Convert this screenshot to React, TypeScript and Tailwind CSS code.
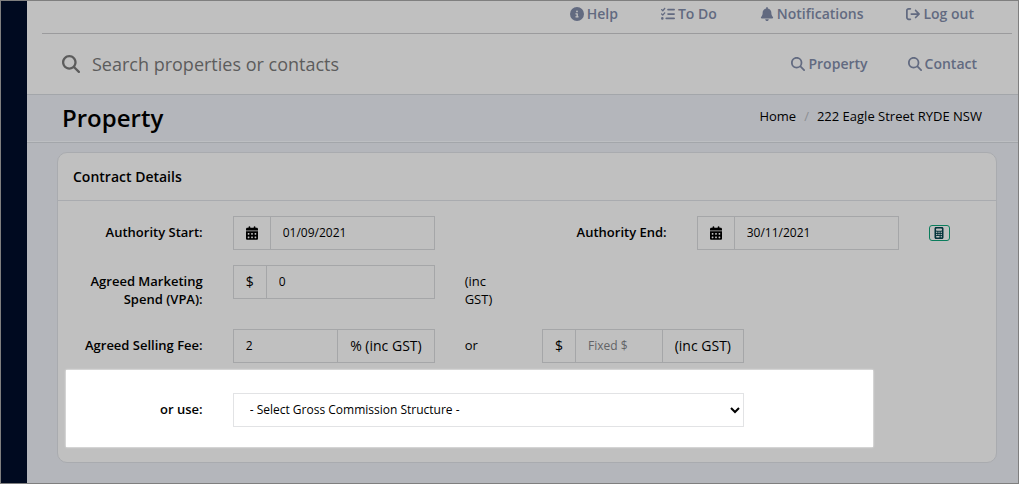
import React from "react";
import {
  FaArrowRightFromBracket,
  FaBell,
  FaCalculator,
  FaCalendarDays,
  FaCircleInfo,
  FaListCheck,
  FaMagnifyingGlass,
} from "react-icons/fa6";

const topLinks = [
  { label: "Help", icon: <FaCircleInfo size={14} /> },
  { label: "To Do", icon: <FaListCheck size={14} /> },
  { label: "Notifications", icon: <FaBell size={14} /> },
  { label: "Log out", icon: <FaArrowRightFromBracket size={14} /> },
];

const searchLinks = ["Property", "Contact"];

const labelClass =
  "block px-[15px] pt-[7px] text-right text-[13px] leading-[18px] font-semibold";
const groupClass = "flex h-[34px] border border-[#a5a6a8]";
const addonClass = "flex shrink-0 items-center border-[#a5a6a8] px-3 text-[14px]";
const inputClass =
  "w-full min-w-0 flex-1 bg-transparent px-3 text-[12px] outline-none placeholder:text-[#626366]";

type DateFieldProps = {
  id: string;
  value: string;
};

const DateField = ({ id, value }: DateFieldProps) => (
  <div className="col-span-3 px-[15px]">
    <div className={groupClass}>
      <span className={`${addonClass} border-r`}>
        <FaCalendarDays size={14} className="w-3" />
      </span>
      <input id={id} type="text" defaultValue={value} className={inputClass} />
    </div>
  </div>
);

const Header = () => (
  <header className="border-b border-[#a3a6aa] bg-[#c0c0c0]">
    <nav className="mr-[6px] ml-[15px] flex h-[33px] justify-end gap-[43px] border-b border-[#9b9b9d] pt-[3px] pr-[38px] text-[14px] leading-5 font-semibold text-[#626a80]">
      {topLinks.map((link) => (
        <a key={link.label} href="#" className="flex h-5 items-center gap-[3px]">
          {link.icon}
          {link.label}
        </a>
      ))}
    </nav>
    <div className="flex h-[60px] items-center pr-[41px] pl-[35px]">
      <label htmlFor="search" className="text-[#5c5c5c]">
        <FaMagnifyingGlass size={18} />
      </label>
      <input
        id="search"
        type="text"
        aria-label="Search properties or contacts"
        placeholder="Search properties or contacts"
        className="min-w-0 flex-1 bg-transparent px-3 text-[18px] outline-none placeholder:text-[#5c5c5c]"
      />
      <div className="flex gap-10 text-[14px] leading-5 font-semibold text-[#626a80]">
        {searchLinks.map((label) => (
          <a key={label} href="#" className="flex items-center gap-[3px]">
            <FaMagnifyingGlass size={14} />
            {label}
          </a>
        ))}
      </div>
    </div>
  </header>
);

const TitleBar = () => (
  <div className="flex h-12 items-start justify-between border-b border-[#a3a6aa] pr-9 pl-[35px] shadow-[inset_0_-1px_0_#bdbfc2]">
    <h1 className="pt-[7px] text-[24px] leading-8 font-semibold">Property</h1>
    <ol className="flex gap-2 pt-[11px] text-[13px] leading-5">
      <li>
        <a href="#">Home</a>
      </li>
      <li className="text-[#8c8e92]">/</li>
      <li>222 Eagle Street RYDE NSW</li>
    </ol>
  </div>
);

const ContractDetails = () => (
  <section className="mx-[30px] mt-[9px] mr-[21px] rounded-[10px] border border-[#a9abaf] bg-[#c0c0c0] pb-[15px]">
    <h2 className="border-b border-[#a9abaf] px-[15px] pt-[14px] pb-[13px] text-[14px] leading-5 font-semibold">
      Contract Details
    </h2>

    <form className="px-[5px] pt-[15px] text-[13px] leading-[18px]">
      <div className="mb-[15px] grid grid-cols-12">
        <label htmlFor="start" className={`${labelClass} col-span-2`}>
          Authority Start:
        </label>
        <DateField id="start" value="01/09/2021" />
        <label htmlFor="end" className={`${labelClass} col-span-3`}>
          Authority End:
        </label>
        <DateField id="end" value="30/11/2021" />
        <div className="col-span-1 flex items-center px-[15px]">
          <button
            type="button"
            aria-label="Calculate end date"
            className="flex h-4 w-[21px] items-center justify-center rounded-[3px] border border-[#0a7d5c] text-[#03333a]"
          >
            <FaCalculator size={12} />
          </button>
        </div>
      </div>

      <div className="mb-[21px] grid grid-cols-12">
        <label htmlFor="spend" className={`${labelClass} col-span-2`}>
          Agreed Marketing Spend (VPA):
        </label>
        <div className="col-span-3 px-[15px]">
          <div className={groupClass}>
            <span className={`${addonClass} border-r`}>$</span>
            <input id="spend" type="text" defaultValue="0" className={inputClass} />
          </div>
        </div>
        <span className="col-span-1 px-[15px] pt-[7px]">(inc GST)</span>
      </div>

      <div className="mb-[7px] grid grid-cols-12">
        <label htmlFor="fee" className={`${labelClass} col-span-2`}>
          Agreed Selling Fee:
        </label>
        <div className="col-span-3 px-[15px]">
          <div className={groupClass}>
            <input id="fee" type="text" defaultValue="2" className={inputClass} />
            <span className={`${addonClass} border-l`}>% (inc GST)</span>
          </div>
        </div>
        <span className="col-span-1 px-[15px] pt-[7px]">or</span>
        <div className="col-span-3 px-[15px]">
          <div className={groupClass}>
            <span className={`${addonClass} border-r`}>$</span>
            <input
              type="text"
              aria-label="Fixed fee"
              placeholder="Fixed $"
              className={inputClass}
            />
            <span className={`${addonClass} border-l`}>(inc GST)</span>
          </div>
        </div>
      </div>

      <div className="relative pt-[23px] pb-5">
        {/* spotlight behind the commission row */}
        <div className="absolute inset-y-0 left-[3px] w-[87%] bg-white shadow-[0_0_2px_#ffffff]" />
        <div className="relative grid grid-cols-12">
          <label htmlFor="structure" className={`${labelClass} col-span-2`}>
            or use:
          </label>
          <div className="col-span-7 px-[15px]">
            <select
              id="structure"
              className="block h-[34px] w-full border border-[#e2e3e5] bg-white px-3 pb-px text-[12px]"
            >
              <option>- Select Gross Commission Structure -</option>
            </select>
          </div>
        </div>
      </div>
    </form>
  </section>
);

const App = () => {
  return (
    <div className="flex min-h-screen border border-[#7f7f7f] bg-[#b4b6bb] font-['Open_Sans',sans-serif] text-black">
      <aside className="w-[26px] shrink-0 bg-[#000a20]" />
      <main className="min-w-0 flex-1">
        <Header />
        <TitleBar />
        <ContractDetails />
      </main>
    </div>
  );
};

export default App;
